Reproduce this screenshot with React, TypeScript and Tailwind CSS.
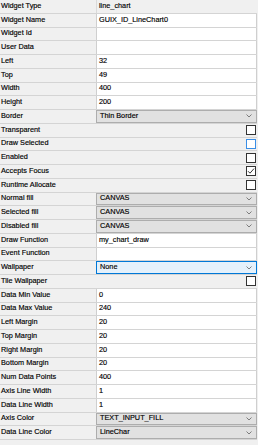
type Kind = "text" | "ro" | "select" | "check";

type Row = {
  label: string;
  kind: Kind;
  value?: string;
  checked?: boolean;
  focus?: boolean;
};

const rows: Row[] = [
  { label: "Widget Type", kind: "ro", value: "line_chart" },
  { label: "Widget Name", kind: "text", value: "GUIX_ID_LineChart0" },
  { label: "Widget Id", kind: "text", value: "" },
  { label: "User Data", kind: "text", value: "" },
  { label: "Left", kind: "text", value: "32" },
  { label: "Top", kind: "text", value: "49" },
  { label: "Width", kind: "text", value: "400" },
  { label: "Height", kind: "text", value: "200" },
  { label: "Border", kind: "select", value: "Thin Border" },
  { label: "Transparent", kind: "check" },
  { label: "Draw Selected", kind: "check", focus: true },
  { label: "Enabled", kind: "check" },
  { label: "Accepts Focus", kind: "check", checked: true },
  { label: "Runtime Allocate", kind: "check" },
  { label: "Normal fill", kind: "select", value: "CANVAS" },
  { label: "Selected fill", kind: "select", value: "CANVAS" },
  { label: "Disabled fill", kind: "select", value: "CANVAS" },
  { label: "Draw Function", kind: "text", value: "my_chart_draw" },
  { label: "Event Function", kind: "text", value: "" },
  { label: "Wallpaper", kind: "select", value: "None", focus: true },
  { label: "Tile Wallpaper", kind: "check" },
  { label: "Data Min Value", kind: "text", value: "0" },
  { label: "Data Max Value", kind: "text", value: "240" },
  { label: "Left Margin", kind: "text", value: "20" },
  { label: "Top Margin", kind: "text", value: "20" },
  { label: "Right Margin", kind: "text", value: "20" },
  { label: "Bottom Margin", kind: "text", value: "20" },
  { label: "Num Data Points", kind: "text", value: "400" },
  { label: "Axis Line Width", kind: "text", value: "1" },
  { label: "Data Line Width", kind: "text", value: "1" },
  { label: "Axis Color", kind: "select", value: "TEXT_INPUT_FILL" },
  { label: "Data Line Color", kind: "select", value: "LineChar" },
];

const Chevron = () => (
  <svg width="6" height="4" viewBox="0 0 6 4" className="mr-[4px] shrink-0">
    <polyline points="0.5,0.5 3,3 5.5,0.5" fill="none" stroke="#707070" strokeWidth="0.9" />
  </svg>
);

const CheckBox = ({ checked, focus }: { checked?: boolean; focus?: boolean }) => (
  <div
    className={`w-[10px] h-[10px] bg-white border flex items-center justify-center ${
      focus ? "border-[#3a8ee6]" : "border-[#333333]"
    }`}
  >
    {checked && (
      <svg width="8" height="8" viewBox="0 0 8 8">
        <polyline points="1,4.2 3,6.2 7,1.6" fill="none" stroke="#333" strokeWidth="1" />
      </svg>
    )}
  </div>
);

const Value = ({ row }: { row: Row }) => {
  if (row.kind === "check") {
    return (
      <div className="flex-1 flex items-center justify-end pr-[1px]">
        <CheckBox checked={row.checked} focus={row.focus} />
      </div>
    );
  }
  if (row.kind === "ro") {
    return (
      <div className="flex-1 flex items-center pl-[2px] border-l border-[#dadada]">
        {row.value}
      </div>
    );
  }
  if (row.kind === "select") {
    return (
      <div
        className={`flex-1 h-full flex items-center justify-between pl-[3px] border ${
          row.focus ? "bg-[#e5f1fb] border-[#0078d7]" : "bg-[#e1e1e1] border-[#adadad]"
        }`}
      >
        <span>{row.value}</span>
        <Chevron />
      </div>
    );
  }
  return (
    <div className="flex-1 h-full flex items-center pl-[2px] bg-white border-l border-r border-[#cfcfcf]">
      {row.value}
    </div>
  );
};

export default function App() {
  return (
    <div className="w-[258px] h-[445px] bg-[#f0f0f0] pr-[1px] font-['Liberation_Sans',Arial,sans-serif] text-[7.3px] text-black [-webkit-text-stroke:0.15px_#000] overflow-hidden">
      {rows.map((row) => (
        <div key={row.label} className="flex h-[13.75px] border-b border-[#d4d4d4]">
          <div className="w-[96px] shrink-0 flex items-center pl-[1px]">{row.label}</div>
          <Value row={row} />
        </div>
      ))}
    </div>
  );
}
